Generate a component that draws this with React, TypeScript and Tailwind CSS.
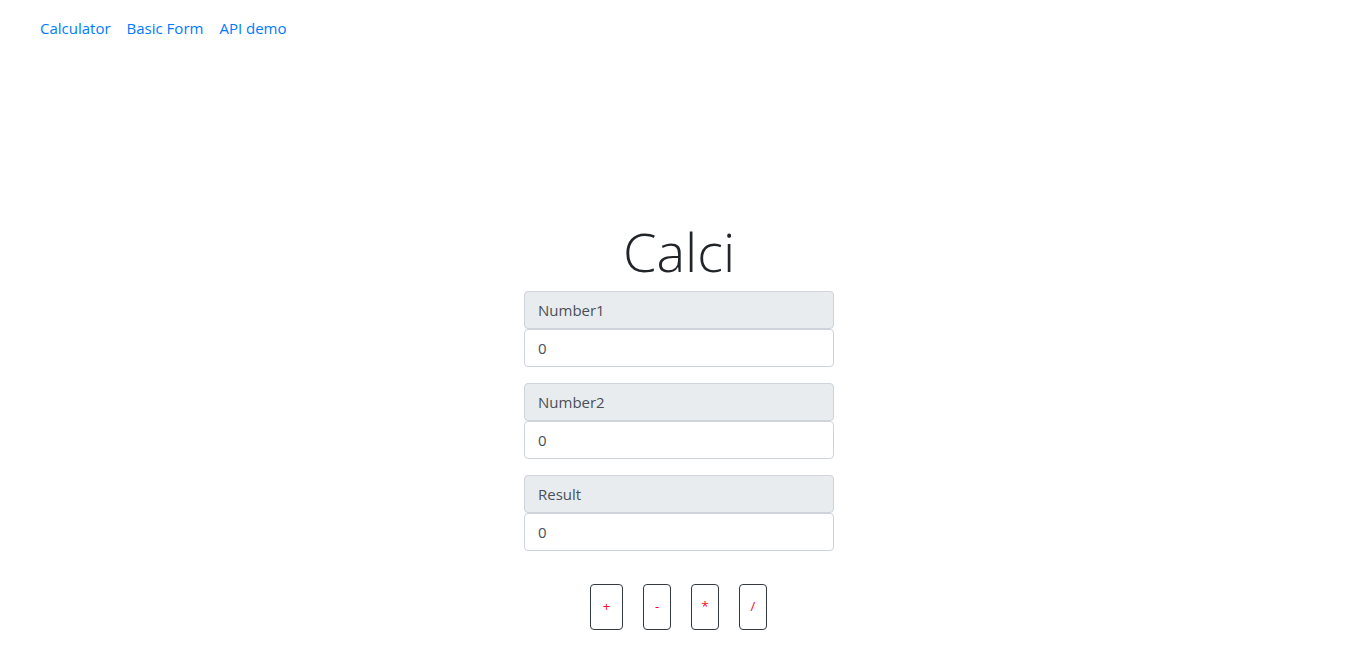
import React, { useState } from 'react';

const font = { fontFamily: '"Open Sans", "Noto Sans", sans-serif' };

const Field: React.FC<{ label: string; value: string; onChange?: (v: string) => void }> = ({
  label,
  value,
  onChange,
}) => (
  <div className="flex flex-col w-[310px] mb-4">
    <div className="h-[38px] flex items-center px-[13px] bg-[#e9ecef] border border-[#ced4da] rounded text-[#495057] text-[15px]">
      {label}
    </div>
    <input
      className="h-[38px] px-[13px] border border-[#ced4da] rounded text-[#495057] text-[15px] outline-none bg-white"
      value={value}
      onChange={(e) => onChange?.(e.target.value)}
    />
  </div>
);

export default function App() {
  const [a, setA] = useState('0');
  const [b, setB] = useState('0');
  const [result, setResult] = useState('0');

  const calc = (op: string) => {
    const x = parseFloat(a) || 0;
    const y = parseFloat(b) || 0;
    let r = 0;
    if (op === '+') r = x + y;
    if (op === '-') r = x - y;
    if (op === '*') r = x * y;
    if (op === '/') r = y === 0 ? 0 : x / y;
    setResult(String(r));
  };

  return (
    <div className="min-h-screen bg-white" style={font}>
      {/* Nav */}
      <nav className="flex items-center gap-4 pl-10 pt-4 pb-4 text-[15px] leading-6">
        <a href="#" className="text-[#007bff]">Calculator</a>
        <a href="#" className="text-[#007bff]">Basic Form</a>
        <a href="#" className="text-[#007bff]">API demo</a>
      </nav>

      {/* Calculator */}
      <div className="flex flex-col items-center pt-[162px]">
        <h1 className="text-[54px] font-light leading-[67px] text-[#212529] mb-[6px]">Calci</h1>
        <Field label="Number1" value={a} onChange={setA} />
        <Field label="Number2" value={b} onChange={setB} />
        <Field label="Result" value={result} />
        <div className="flex gap-5 mt-[17px] -ml-[1px]">
          {['+', '-', '*', '/'].map((op) => (
            <button
              key={op}
              onClick={() => calc(op)}
              className={`h-[46px] ${op === '+' ? 'w-[33px]' : 'w-[28px]'} border border-[#343a40] rounded text-[13px] text-[#ff0022] flex items-center justify-center`}
            >
              {op}
            </button>
          ))}
        </div>
      </div>
    </div>
  );
}
